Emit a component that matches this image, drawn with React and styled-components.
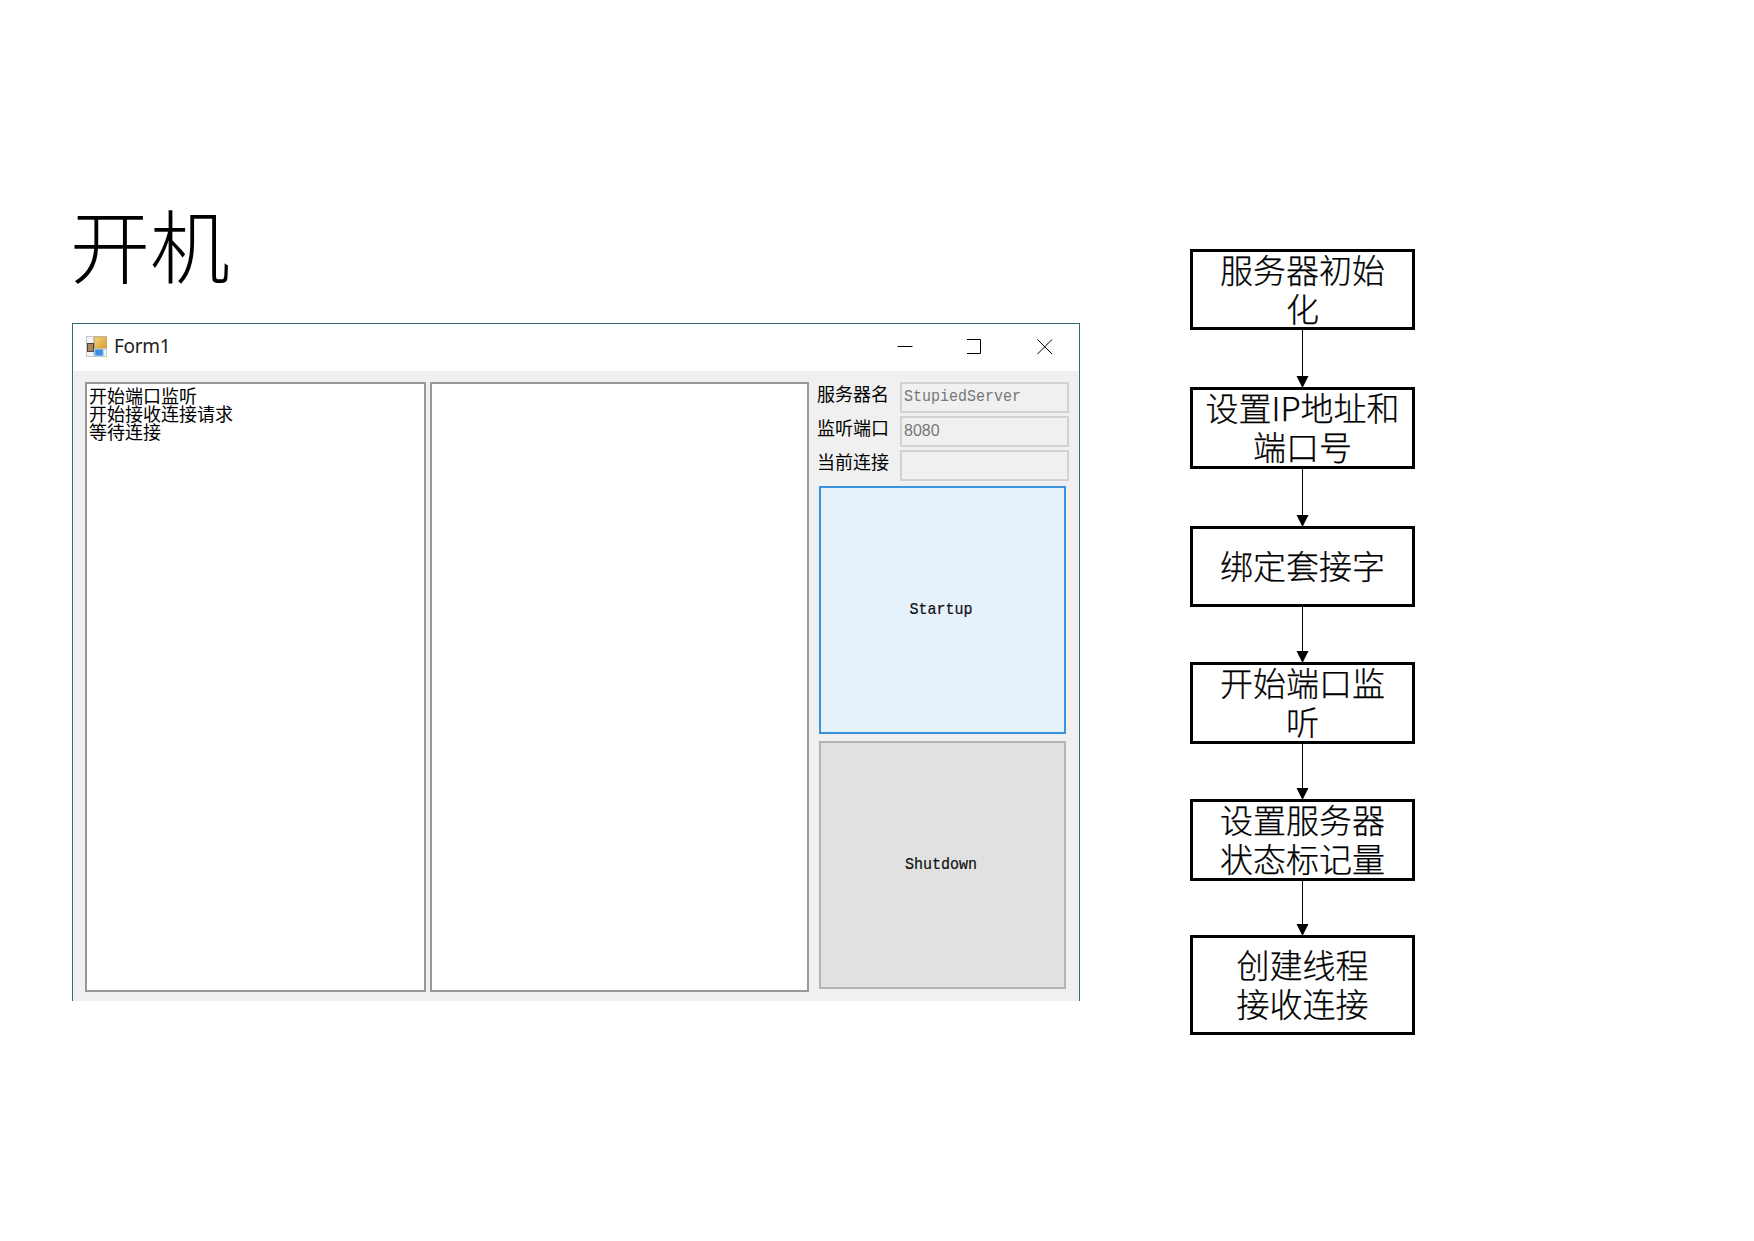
import React from "react";
import styled, { createGlobalStyle } from "styled-components";

const GlobalStyle = createGlobalStyle`
  *, *::before, *::after { box-sizing: border-box; }
  body { margin: 0; background: #fff; }
`;

const cjk = `"Noto Sans CJK SC", sans-serif`;

const Slide = styled.main`
  display: flex;
  width: 1754px;
  height: 1241px;
  background: #fff;
  color: #000;
  font-family: ${cjk};
  overflow: hidden;
`;

const Demo = styled.section`
  width: 1008px;
  margin-left: 72px;
  padding-top: 202px;
`;

const Title = styled.h1`
  height: 121px;
  margin: 0 0 0 -2px;
  font-size: 80px;
  line-height: 80px;
  font-weight: 300;
`;

const Window = styled.div`
  display: flex;
  flex-direction: column;
  height: 678px;
  border: 1px solid #35697c;
  border-bottom: 0;
  background: #fff;
`;

const TitleBar = styled.header`
  display: flex;
  align-items: center;
  flex: 0 0 47px;
  padding: 0 26px 3px 13px;
`;

const Caption = styled.span`
  flex: 1;
  margin-left: 7px;
  font: 19px/24px "Noto Sans", sans-serif;
  letter-spacing: -0.3px;
  color: #222;
`;

const Controls = styled.div`
  display: flex;
  gap: 54px;
  padding-top: 2px;
`;

const Client = styled.div`
  display: flex;
  flex: 1;
  padding: 11px 10px 8px 12px;
  background: #f0f0f0;
`;

const ListBox = styled.div`
  width: ${(p) => p.$width}px;
  height: 610px;
  margin-right: ${(p) => p.$gap}px;
  padding: 2px;
  border: 2px solid #999;
  background: #fff;
  font-size: 18px;
  line-height: 18px;
`;

const Side = styled.aside`
  display: flex;
  flex-direction: column;
  width: 252px;
`;

const Field = styled.label`
  display: flex;
  justify-content: space-between;
  height: 31px;
  margin-bottom: 3px;
  font-size: 18px;
  line-height: 23px;
`;

const Input = styled.span`
  width: 169px;
  padding-left: 2px;
  border: 2px solid #d2d2d2;
  color: #777;
  font: ${(p) => (p.$numeric ? `16px/25px "Liberation Sans", sans-serif` : `15px/27px "Liberation Mono", monospace`)};
`;

const MonoText = styled.span`
  display: inline-block;
  transform: scaleY(1.12);
  -webkit-text-stroke: ${(p) => p.$stroke}px currentColor;
`;

const Button = styled.button`
  width: 247px;
  height: 248px;
  margin: ${(p) => (p.$active ? "2px 0 0 2px" : "7px 0 0 2px")};
  padding: 2px 3px 0 0;
  border: ${(p) => (p.$active ? "2px solid #3b93dc" : "2px solid #b4b4b4")};
  background: ${(p) => (p.$active ? "#e5f1fb" : "#e1e1e1")};
  color: #111;
  font: 15px/18px "Liberation Mono", monospace;
`;

const Flow = styled.section`
  display: flex;
  flex-direction: column;
  align-items: center;
  width: 225px;
  margin-left: 110px;
  padding-top: 249px;
`;

const Step = styled.div`
  display: flex;
  align-items: center;
  justify-content: center;
  flex: none;
  height: ${(p) => p.$height}px;
  padding-bottom: ${(p) => p.$lift}px;
  width: 225px;
  border: 3px solid #000;
  font-size: 33px;
  line-height: 39px;
  font-weight: 300;
  -webkit-text-stroke: 0.25px #000;
  text-align: center;
  white-space: pre;
`;

const Arrow = styled.svg`
  flex: none;
  display: block;
`;

const steps = [
  { text: "服务器初始\n化", height: 81, gap: 57, lift: 1 },
  { text: "设置IP地址和\n端口号", height: 82, gap: 57, lift: 3 },
  { text: "绑定套接字", height: 81, gap: 55, lift: 3 },
  { text: "开始端口监\n听", height: 82, gap: 55, lift: 3 },
  { text: "设置服务器\n状态标记量", height: 82, gap: 54, lift: 3 },
  { text: "创建线程\n接收连接", height: 100, gap: 0, lift: 3 },
];

function FormIcon() {
  return (
    <svg width="21" height="21" viewBox="0 0 21 21">
      <defs>
        <linearGradient id="gold" x2="1" y2="1">
          <stop stopColor="#f5d985" />
          <stop offset="1" stopColor="#d79a26" />
        </linearGradient>
      </defs>
      <rect x="0.5" y="0.5" width="20" height="20" fill="#f4f4f4" stroke="#c9c9c9" />
      <path d="M7.5 1V20M1 13H20" stroke="#cfcfd2" />
      <rect x="8.5" y="1" width="12" height="11" fill="url(#gold)" stroke="#c8a867" />
      <rect x="1.5" y="7.5" width="6" height="8" fill="#a58c67" stroke="#4d4438" />
      <path d="M9 13.5H17V19.5H9Z" fill="#3b8fe0" stroke="#72afe6" />
    </svg>
  );
}

export default function App() {
  return (
    <Slide>
      <GlobalStyle />
      <Demo>
        <Title>开机</Title>
        <Window>
          <TitleBar>
            <FormIcon />
            <Caption>Form1</Caption>
            <Controls>
              <svg width="16" height="16"><path d="M.5 7.5H15.5" stroke="#000" /></svg>
              <svg width="16" height="16"><path d="M0 .5H13.5V14.5H0" fill="none" stroke="#000" /></svg>
              <svg width="16" height="16"><path d="M.5 .5L15 15M15 .5L.5 15" stroke="#000" /></svg>
            </Controls>
          </TitleBar>
          <Client>
            <ListBox $width={341} $gap={4}>
              <div>开始端口监听</div>
              <div>开始接收连接请求</div>
              <div>等待连接</div>
            </ListBox>
            <ListBox $width={379} $gap={8} />
            <Side>
              <Field>服务器名<Input><MonoText $stroke={0}>StupiedServer</MonoText></Input></Field>
              <Field>监听端口<Input $numeric>8080</Input></Field>
              <Field>当前连接<Input /></Field>
              <Button $active><MonoText $stroke={0.2}>Startup</MonoText></Button>
              <Button><MonoText $stroke={0.2}>Shutdown</MonoText></Button>
            </Side>
          </Client>
        </Window>
      </Demo>
      <Flow>
        {steps.map((s) => (
          <React.Fragment key={s.text}>
            <Step $height={s.height} $lift={s.lift}>{s.text}</Step>
            {s.gap > 0 && (
              <Arrow width="13" height={s.gap} overflow="visible">
                <path d={`M6.5 0V${s.gap}`} stroke="#000" />
                <path d={`M.5 ${s.gap - 11}H12.5L6.5 ${s.gap + 1}Z`} />
              </Arrow>
            )}
          </React.Fragment>
        ))}
      </Flow>
    </Slide>
  );
}
